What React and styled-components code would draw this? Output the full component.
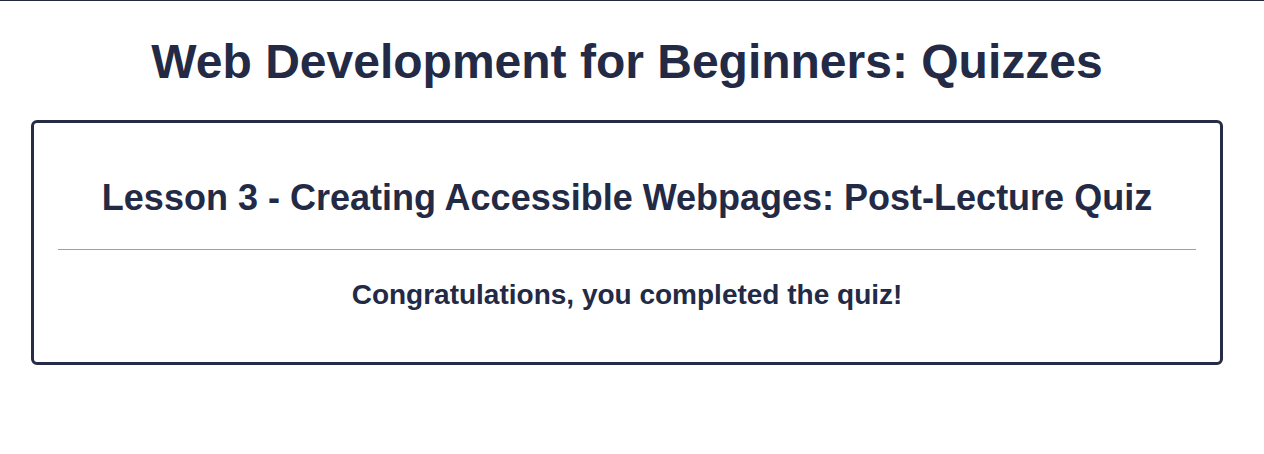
import React from "react";
import styled, { createGlobalStyle } from "styled-components";

const Global = createGlobalStyle`
  html, body { margin: 0; padding: 0; background: #fff; }
  body { font-family: "Liberation Sans", Arial, sans-serif; color: #232a45; }
`;

const Page = styled.div`
  border-top: 1px solid #232a3e;
  padding: 0 41px 0 31px;
  text-align: center;
`;

const Title = styled.h1`
  margin: 0;
  padding: 33px 0 30px;
  font-size: 48px;
  line-height: 56px;
  font-weight: 700;
`;

const Card = styled.section`
  border: 3px solid #262c47;
  border-radius: 6px;
  padding: 0 24px;
`;

const LessonTitle = styled.h2`
  margin: 0;
  padding: 53px 0 29px;
  font-size: 36px;
  line-height: 44px;
  font-weight: 700;
`;

const Rule = styled.hr`
  margin: 0;
  border: 0;
  border-top: 1px solid #a0a0a0;
`;

const Message = styled.h3`
  margin: 0;
  padding: 28px 0 50px;
  font-size: 28px;
  line-height: 34px;
  font-weight: 700;
`;

export default function App() {
  return (
    <>
      <Global />
      <Page>
        <Title>Web Development for Beginners: Quizzes</Title>
        <Card>
          <LessonTitle>Lesson 3 - Creating Accessible Webpages: Post-Lecture Quiz</LessonTitle>
          <Rule />
          <Message>Congratulations, you completed the quiz!</Message>
        </Card>
      </Page>
    </>
  );
}
